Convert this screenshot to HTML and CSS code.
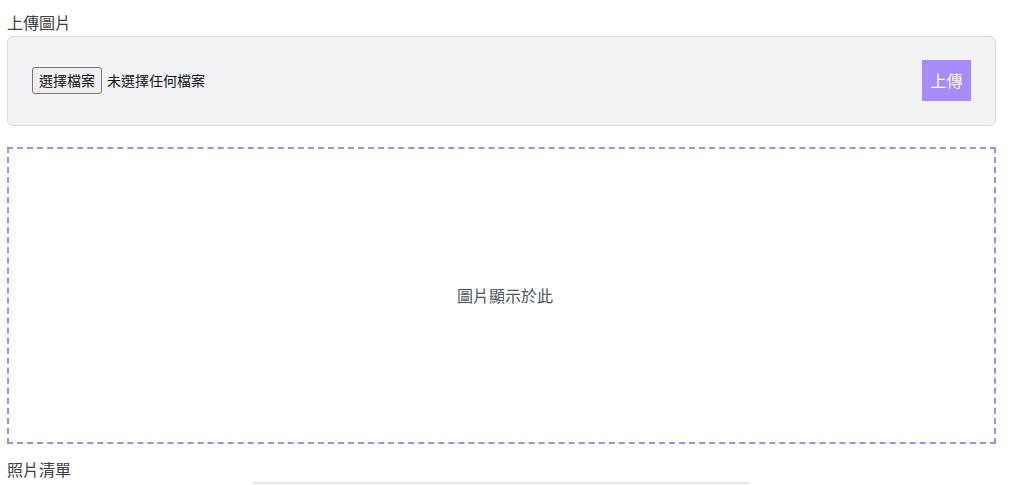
FILE: index.html
```html
<!DOCTYPE html>
<html lang="zh-Hant">
<head>
<meta charset="utf-8">
<title>上傳圖片</title>
<link rel="stylesheet" href="styles.css">
</head>
<body>
<div class="page">
  <div class="section-title">上傳圖片</div>
  <div class="upload-panel">
    <div class="file-field">
      <span class="file-btn">選擇檔案</span>
      <span class="file-name">未選擇任何檔案</span>
    </div>
    <button class="upload-btn">上傳</button>
  </div>
  <div class="preview">圖片顯示於此</div>
  <div class="section-title list-title">照片清單</div>
  <div class="photo-list"></div>
</div>
</body>
</html>
```
FILE: styles.css
```css
html, body {
  margin: 0;
  padding: 0;
  background: #fff;
}
body {
  font-family: "Noto Sans CJK TC", "Noto Sans", sans-serif;
  color: #333;
}
.page {
  width: 989px;
  padding: 11px 0 0 7px;
}
.section-title {
  font-size: 16px;
  line-height: 23px;
  color: #404040;
  margin-bottom: 2px;
}
.upload-panel {
  height: 88px;
  box-sizing: content-box;
  border: 1px solid #d9dadd;
  border-radius: 6px;
  background: #f2f3f5;
  display: flex;
  align-items: center;
  justify-content: space-between;
  padding: 0 24px 0 24px;
}
.file-field {
  display: flex;
  align-items: center;
  gap: 5px;
  font-size: 14px;
  color: #111;
  margin-top: -2px;
}
.file-btn {
  display: inline-block;
  height: 25px;
  line-height: 25px;
  padding: 0 6px;
  border: 1px solid #767676;
  border-radius: 3px;
  background: #efefef;
  color: #111;
}
.upload-btn {
  width: 49px;
  height: 41px;
  border: none;
  background: #a78bfa;
  color: #fff;
  font-family: inherit;
  font-size: 16px;
  padding: 0;
  margin-top: -2px;
}
.preview {
  margin-top: 21px;
  height: 292px;
  border: 2px dashed #a78bfa;
  display: flex;
  align-items: center;
  justify-content: center;
  font-size: 16px;
  color: #4b5563;
  padding: 0 0 1px 7px;
  box-sizing: content-box;
}
.list-title {
  margin-top: 14px;
  margin-bottom: 0;
}
.photo-list {
  width: 495px;
  margin: 1px auto 0;
  border-top: 2px solid #e5e5e5;
  height: 20px;
}
```
